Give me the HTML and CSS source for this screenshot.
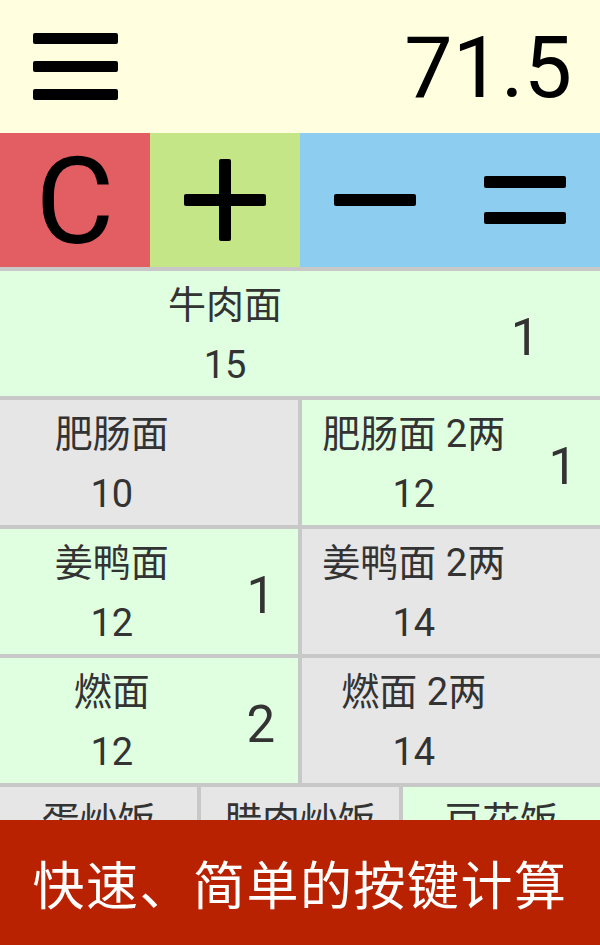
FILE: index.html
```html
<!DOCTYPE html>
<html lang="zh-CN">

<head>
    <meta name="viewport" content="width=device-width, initial-scale=1.0">
    <meta charset="UTF-8">
    <title>点菜计算器</title>
    <link rel="stylesheet" href="styles.css">
</head>

<body>
    <!-- Top bar: menu button and running total -->
    <header class="display">
        <div class="menu-button">
            <span></span>
            <span></span>
            <span></span>
        </div>
        <div class="total">71.5</div>
    </header>

    <!-- Operator keys -->
    <div class="keys">
        <div class="key key-clear">C</div>
        <div class="key key-plus"><span class="bar bar-h"></span><span class="bar bar-v"></span></div>
        <div class="key key-op"><span class="bar bar-h"></span></div>
        <div class="key key-op key-equals"><span class="bar bar-h"></span><span class="bar bar-h"></span></div>
    </div>

    <main class="dishes">
        <div class="dish-row row-1">
            <div class="dish picked">
                <div class="dish-info"><div>牛肉面</div><div>15</div></div>
                <div class="dish-count">1</div>
            </div>
        </div>

        <div class="dish-row row-2">
            <div class="dish">
                <div class="dish-info"><div>肥肠面</div><div>10</div></div>
                <div class="dish-count"></div>
            </div>
            <div class="dish picked">
                <div class="dish-info"><div>肥肠面 2两</div><div>12</div></div>
                <div class="dish-count">1</div>
            </div>
        </div>

        <div class="dish-row row-2">
            <div class="dish picked">
                <div class="dish-info"><div>姜鸭面</div><div>12</div></div>
                <div class="dish-count">1</div>
            </div>
            <div class="dish">
                <div class="dish-info"><div>姜鸭面 2两</div><div>14</div></div>
                <div class="dish-count"></div>
            </div>
        </div>

        <div class="dish-row row-2">
            <div class="dish picked">
                <div class="dish-info"><div>燃面</div><div>12</div></div>
                <div class="dish-count">2</div>
            </div>
            <div class="dish">
                <div class="dish-info"><div>燃面 2两</div><div>14</div></div>
                <div class="dish-count"></div>
            </div>
        </div>

        <div class="dish-row row-3">
            <div class="dish">
                <div class="dish-info"><div>蛋炒饭</div><div>10</div></div>
            </div>
            <div class="dish">
                <div class="dish-info"><div>腊肉炒饭</div><div>14</div></div>
            </div>
            <div class="dish picked">
                <div class="dish-info"><div>豆花饭</div><div>8</div></div>
            </div>
        </div>
    </main>

    <!-- Promo banner -->
    <footer class="banner">快速、简单的按键计算</footer>
</body>

</html>
```

FILE: styles.css
```css
body {
    margin: 0;
    font-family: Roboto, "Noto Sans CJK SC", sans-serif;
    color: #333;
    height: 945px;
    overflow: hidden;
    display: flex;
    flex-direction: column;
}

/* Top bar */
.display {
    display: flex;
    align-items: center;
    justify-content: space-between;
    flex: 0 0 133px;
    padding: 0 28px 0 33px;
    box-sizing: border-box;
    background-color: #ffffe0;
}

.menu-button {
    display: flex;
    flex-direction: column;
    gap: 17px;
    margin-top: -1px;
}

.menu-button span {
    display: block;
    width: 85px;
    height: 11px;
    border-radius: 2px;
    background-color: #000;
}

.total {
    font-size: 86px;
    color: #000;
    line-height: 1;
    margin-top: 3px;
}

/* Operator keys */
.keys {
    display: grid;
    grid-template-columns: repeat(4, 1fr);
    flex: 0 0 134px;
}

.key {
    display: flex;
    flex-direction: column;
    align-items: center;
    justify-content: center;
    position: relative;
    color: #000;
}

.key-clear {
    background-color: #e35e62;
    font-size: 121px;
    line-height: 1;
    padding-top: 5px;
}

.key-plus {
    background-color: #c5e687;
}

.key-op {
    background-color: #8dcef0;
}

.bar {
    display: block;
    background-color: #000;
    border-radius: 2px;
}

.bar-h {
    width: 82px;
    height: 12px;
}

.bar-v {
    position: absolute;
    width: 12px;
    height: 82px;
}

.key-equals {
    gap: 24px;
}

/* Dish list */
.dishes {
    flex: 1;
    overflow: hidden;
    display: flex;
    flex-direction: column;
    gap: 4px;
    padding-top: 4px;
    background-color: #c8c8c8;
}

.dish-row {
    display: grid;
    gap: 4px;
    flex: 0 0 125px;
}

.row-1 {
    grid-template-columns: 1fr;
}

.row-2 {
    grid-template-columns: 1fr 1fr;
}

.row-3 {
    grid-template-columns: 1fr 1fr 1fr;
}

.dish {
    display: flex;
    align-items: center;
    background-color: #e6e6e6;
}

.dish.picked {
    background-color: #e0ffe0;
}

.dish-info {
    flex: 3;
    text-align: center;
    font-size: 38px;
    line-height: 60px;
    padding-top: 2px;
    white-space: nowrap;
}

.dish-count {
    flex: 1;
    text-align: center;
    font-size: 51px;
    padding-top: 7px;
}

/* Banner */
.banner {
    flex: 0 0 125px;
    display: flex;
    align-items: center;
    justify-content: center;
    background-color: #b82200;
    color: #fff;
    font-family: "Noto Sans CJK SC", sans-serif;
    font-size: 52px;
    letter-spacing: 1.5px;
}
```
